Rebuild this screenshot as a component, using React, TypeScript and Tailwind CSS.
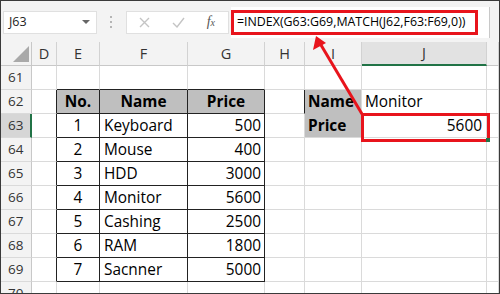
const COLS = ["D", "E", "F", "G", "H", "I", "J", "K"];
const ROWS = [61, 62, 63, 64, 65, 66, 67, 68, 69, 70];

const ITEMS = [
  ["1", "Keyboard", "500"],
  ["2", "Mouse", "400"],
  ["3", "HDD", "3000"],
  ["4", "Monitor", "5600"],
  ["5", "Cashing", "2500"],
  ["6", "RAM", "1800"],
  ["7", "Sacnner", "5000"],
];

const inTable = (c: string, r: number) => ["E", "F", "G"].includes(c) && r >= 62 && r <= 69;

function cellContent(c: string, r: number) {
  if (r === 62) {
    if (c === "E") return { text: "No.", cls: "justify-center font-bold" };
    if (c === "F") return { text: "Name", cls: "justify-center font-bold" };
    if (c === "G") return { text: "Price", cls: "justify-center font-bold" };
    if (c === "I") return { text: "Name", cls: "pl-[3px] font-bold" };
    if (c === "J") return { text: "Monitor", cls: "pl-[3px]" };
  }
  if (r === 63) {
    if (c === "I") return { text: "Price", cls: "pl-[3px] font-bold" };
    if (c === "J") return { text: "5600", cls: "justify-end pr-[4px]" };
  }
  if (r >= 63 && r <= 69) {
    const it = ITEMS[r - 63];
    if (c === "E") return { text: it[0], cls: "justify-center" };
    if (c === "F") return { text: it[1], cls: "pl-[4px]" };
    if (c === "G") return { text: it[2], cls: "justify-end pr-[3px]" };
  }
  return null;
}

function Cell({ c, r }: { c: string; r: number }) {
  const table = inTable(c, r);
  const rightBlack = table || (c === "D" && r >= 62 && r <= 69) || (c === "H" && r === 62);
  const bottomBlack = table || (["E", "F", "G"].includes(c) && r === 61);
  const header = (["E", "F", "G"].includes(c) && r === 62) || (c === "I" && (r === 62 || r === 63));
  const content = cellContent(c, r);
  return (
    <div
      className={[
        "flex items-center h-[24px] border-r border-b text-[15.4px] text-black whitespace-nowrap overflow-hidden",
        rightBlack ? "border-r-[#222]" : "border-r-[#dadada]",
        bottomBlack ? "border-b-[#222]" : c === "I" && r === 62 ? "border-b-[#bfbfbf]" : "border-b-[#dadada]",
        header ? "bg-[#bfbfbf]" : "bg-white",
        content ? content.cls : "",
      ].join(" ")}
    >
      {content?.text}
    </div>
  );
}

export default function App() {
  return (
    <div className="w-[500px] h-[294px] overflow-hidden border border-[#3a3a3a] bg-white relative font-['Open_Sans',sans-serif]">
      {/* formula bar */}
      <div className="h-[41px] bg-[#f3f3f3] flex items-center pt-[1px]">
        <div className="ml-[2px] w-[94px] h-[23px] bg-white border border-[#e0e0e0] flex items-center justify-between pl-[5px] pr-[6px]">
          <span className="text-[12.5px] text-[#222]">J63</span>
          <span className="w-0 h-0 border-l-[4px] border-r-[4px] border-t-[4px] border-l-transparent border-r-transparent border-t-[#666]" />
        </div>
        <div className="ml-[13px] flex flex-col gap-[3px]">
          <span className="w-[2px] h-[2px] bg-[#b5b5b5]" />
          <span className="w-[2px] h-[2px] bg-[#b5b5b5]" />
          <span className="w-[2px] h-[2px] bg-[#b5b5b5]" />
        </div>
        <div className="ml-[14px] w-[103px] h-[23px] bg-white border border-[#e0e0e0] flex items-center pl-[12px] pr-[13px] justify-between">
          <svg width="11" height="11" viewBox="0 0 11 11">
            <path d="M1 1 L10 10 M10 1 L1 10" stroke="#c4c4c4" strokeWidth="1.4" />
          </svg>
          <svg width="13" height="11" viewBox="0 0 13 11">
            <path d="M1 6 L5 10 L12 1" stroke="#c4c4c4" strokeWidth="1.4" fill="none" />
          </svg>
          <span className="font-['Liberation_Serif',serif] italic text-[14px] text-[#555] leading-none">
            f<span className="text-[10px]">x</span>
          </span>
        </div>
        <div className="ml-[2px] w-[259px] h-[31px] bg-white flex items-center border-r border-[#c8c8c8]">
          <div className="w-[247px] h-[25px] border-[3px] border-[#e8141c] flex items-center pl-[3px]">
            <span className="text-[12.4px] text-black leading-none">=INDEX(G63:G69,MATCH(J62,F63:F69,0))</span>
          </div>
        </div>
      </div>

      {/* sheet grid */}
      <div className="grid grid-cols-[31px_25px_43px_88px_77px_40px_57px_125px_1fr] auto-rows-[24px]">
        <div className="h-[24px] bg-[#f3f3f3] border-r border-b border-[#c8c8c8] flex items-end justify-end pr-[2px] pb-[3px]">
          <svg width="16" height="16" viewBox="0 0 16 16" className="block shrink-0">
            <path d="M16 0 L16 16 L0 16 Z" fill="#a9a9a9" />
          </svg>
        </div>
        {COLS.map((c) => (
          <div
            key={c}
            className={[
              "h-[24px] flex items-center justify-center text-[14.5px] text-[#333] border-r border-r-[#d2d2d2]",
              c === "J" ? "bg-[#e2e2e2] border-b-2 border-b-[#217346]" : "bg-[#f3f3f3] border-b border-b-[#c8c8c8]",
            ].join(" ")}
          >
            {c === "K" ? "" : c}
          </div>
        ))}
        {ROWS.map((r) => (
          <div key={r} className="contents">
            <div
              className={[
                "h-[24px] flex items-center pl-[7px] text-[13.5px] text-[#333] border-b border-b-[#dadada]",
                r === 63 ? "bg-[#d6d6d6] border-r-2 border-r-[#217346]" : "bg-[#f3f3f3] border-r border-r-[#c8c8c8]",
              ].join(" ")}
            >
              {r}
            </div>
            {COLS.map((c) => (
              <Cell key={c} c={c} r={r} />
            ))}
          </div>
        ))}
      </div>

      {/* highlight on J63 */}
      <div className="absolute left-[360px] top-[112px] w-[129px] h-[29px] border-[3px] border-[#e8141c] pointer-events-none">
        <div className="absolute right-[-3px] bottom-[-3px] w-[4px] h-[4px] bg-[#217346]" />
      </div>

      {/* arrow */}
      <svg className="absolute left-0 top-0 pointer-events-none" width="500" height="294">
        <line x1="361" y1="113" x2="320" y2="44" stroke="#e8141c" strokeWidth="3" />
        <polygon points="315,35 312,49 325,42" fill="#e8141c" />
      </svg>
    </div>
  );
}
